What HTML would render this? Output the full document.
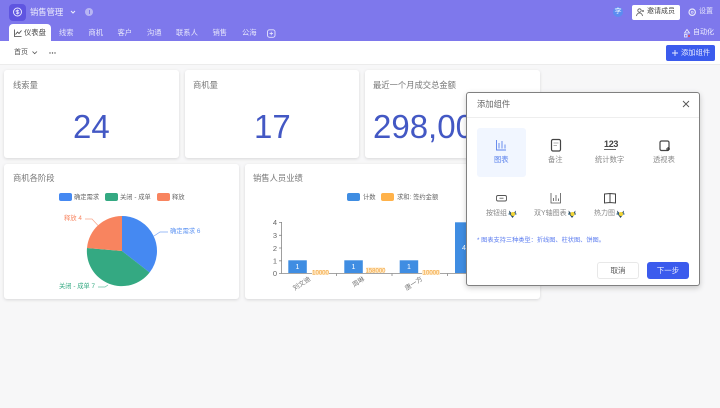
<!DOCTYPE html>
<html lang="zh"><head><meta charset="utf-8"><style>
*{box-sizing:border-box}
html,body{margin:0;padding:0}
body{width:720px;height:408px;overflow:hidden;position:relative;background:#f7f7f8;font-family:"Liberation Sans","Noto Sans CJK SC",sans-serif;color:#555}
#w{position:absolute;left:0;top:0;width:720px;height:408px;filter:blur(.3px)}
.a{position:absolute;white-space:nowrap}
.tab{position:absolute;top:28px;font-size:7.3px;line-height:10px;color:#e6e6fb;white-space:nowrap}
.card{position:absolute;background:#fff;border-radius:3px;box-shadow:0 1px 3px rgba(0,0,0,.13)}
.title{position:absolute;left:9px;top:9px;font-size:8.3px;line-height:12px;color:#777;white-space:nowrap}
.num{position:absolute;top:36px;font-size:33px;line-height:42px;color:#4358c4;white-space:nowrap}
.lab{position:absolute;font-size:7.3px;line-height:10px;color:#8a8a8a;white-space:nowrap;text-align:center}
.leg{position:absolute;font-size:6.3px;line-height:9px;color:#666;white-space:nowrap}
svg{position:absolute;overflow:visible}
</style></head><body><div id="w">
<div class="a" style="left:0;top:0;width:720px;height:41px;background:#7e78ec"></div>
<div class="a" style="left:9px;top:4px;width:17px;height:17px;border-radius:4px;background:#5f55e0"></div>
<svg style="left:9px;top:4px" width="17" height="17"><circle cx="8.500" cy="8" r="4" fill="none" stroke="#e8e8ff" stroke-width="1"/><path d="M8.500 5.500v5M10 6.500H8Q7 6.500 7 7.300T8 8H9Q10 8 10 8.800T9 9.500H7" fill="none" stroke="#e8e8ff" stroke-width=".7"/></svg>
<div class="a" style="left:30px;top:6px;font-size:8.300px;line-height:12px;color:#eeeefc">销售管理</div>
<svg style="left:70px;top:10px" width="6" height="5"><path d="M1 1L3 3 5 1" fill="none" stroke="#eeeefc" stroke-width="1"/></svg>
<div class="a" style="left:85px;top:8px;width:8px;height:8px;border-radius:50%;background:#b7b5f3"></div>
<div class="a" style="left:88.500px;top:10px;width:1px;height:4px;background:#7e78ec"></div>
<div class="a" style="left:9px;top:24px;width:42px;height:17px;background:#fff;border-radius:4px 4px 0 0"></div>
<svg style="left:14px;top:29px" width="8" height="8"><path d="M.500 .500V7.500H7.500M1.500 5.500L3.500 3 5 4.500 7.500 1.500" fill="none" stroke="#444" stroke-width=".8"/></svg>
<div class="tab" style="left:24px;color:#444">仪表盘</div>
<div class="tab" style="left:59px">线索</div>
<div class="tab" style="left:88.500px">商机</div>
<div class="tab" style="left:117.500px">客户</div>
<div class="tab" style="left:147px">沟通</div>
<div class="tab" style="left:176px">联系人</div>
<div class="tab" style="left:212.500px">销售</div>
<div class="tab" style="left:242px">公海</div>
<svg style="left:267px;top:29px" width="9" height="9"><rect x=".5" y=".8" width="7.500" height="7.500" rx="2" fill="none" stroke="#e6e6fb" stroke-width=".9"/><path d="M4.250 2.800V6.300M2.500 4.550H6" stroke="#e6e6fb" stroke-width=".8"/></svg>
<div class="a" style="left:613px;top:7px;width:10px;height:10px;border-radius:50%;background:#5b8cf0"></div>
<div class="a" style="left:614.500px;top:7px;font-size:7px;line-height:10px;color:#e8f0ff">李</div>
<div class="a" style="left:632px;top:4.500px;width:48px;height:15px;background:#fff;border-radius:2px"></div>
<svg style="left:636px;top:8px" width="9" height="9"><circle cx="3.500" cy="2.500" r="1.700" fill="none" stroke="#555" stroke-width=".8"/><path d="M.5 8Q1 5 3.500 5T6.500 8M7 2V4M6 3H8" fill="none" stroke="#555" stroke-width=".8"/></svg>
<div class="a" style="left:647px;top:7px;font-size:7px;line-height:10px;color:#444">邀请成员</div>
<svg style="left:688px;top:8px" width="9" height="9"><circle cx="4.200" cy="4.200" r="3.200" fill="none" stroke="#e6e6fb" stroke-width="1.200"/><circle cx="4.200" cy="4.200" r="1" fill="none" stroke="#e6e6fb" stroke-width=".7"/></svg>
<div class="a" style="left:699px;top:7px;font-size:7px;line-height:10px;color:#e6e6fb">设置</div>
<svg style="left:683px;top:29px" width="8" height="9"><path d="M4 .500L6.500 4H1.500ZM1.500 5.500H4V8H1.500Z" fill="none" stroke="#f0f0ff" stroke-width=".8"/><circle cx="6" cy="7" r="1" fill="#e6454a"/></svg>
<div class="a" style="left:693px;top:28px;font-size:7px;line-height:10px;color:#f0f0ff">自动化</div>

<div class="a" style="left:0;top:41px;width:720px;height:24px;background:#fff;border-bottom:1px solid #ececec"></div>
<div class="a" style="left:14px;top:47.500px;font-size:7px;line-height:10px;color:#555">首页</div>
<svg style="left:32px;top:51px" width="6" height="4"><path d="M.5 .500L2.700 2.700 5 .500" fill="none" stroke="#555" stroke-width=".8"/></svg>
<svg style="left:49px;top:52px" width="8" height="2"><circle cx="1" cy="1" r=".7" fill="#555"/><circle cx="3.500" cy="1" r=".7" fill="#555"/><circle cx="6" cy="1" r=".7" fill="#555"/></svg>
<div class="a" style="left:666px;top:45px;width:49px;height:16px;background:#3b5bed;border-radius:2px"></div>
<svg style="left:671px;top:49px" width="8" height="8"><path d="M4 1V7M1 4H7" stroke="#e8ecff" stroke-width=".9"/></svg>
<div class="a" style="left:681px;top:48px;font-size:7.300px;line-height:10px;color:#e4e8ff">添加组件</div>

<div class="card" style="left:4px;top:70px;width:175px;height:88px"><div class="title">线索量</div><div class="num" style="left:69px">24</div></div>
<div class="card" style="left:185px;top:70px;width:174px;height:88px"><div class="title" style="left:8px">商机量</div><div class="num" style="left:69px">17</div></div>
<div class="card" style="left:365px;top:70px;width:175px;height:88px;overflow:hidden"><div class="title" style="left:8px">最近一个月成交总金额</div><div class="num" style="left:8px">298,000</div></div>

<div class="card" style="left:4px;top:164px;width:235px;height:135px"><div class="title" style="top:8px">商机各阶段</div></div>
<div class="card" style="left:245px;top:164px;width:295px;height:135px"><div class="title" style="left:8px;top:8px">销售人员业绩</div></div>

<!-- pie legend -->
<div class="a" style="left:59px;top:193px;width:13px;height:8px;background:#4589f2;border-radius:2px"></div>
<div class="leg" style="left:74px;top:193px">确定需求</div>
<div class="a" style="left:105px;top:193px;width:13px;height:8px;background:#34a982;border-radius:2px"></div>
<div class="leg" style="left:120px;top:193px">关闭 - 成单</div>
<div class="a" style="left:157px;top:193px;width:13px;height:8px;background:#f8845f;border-radius:2px"></div>
<div class="leg" style="left:172px;top:193px">释放</div>
<svg style="left:0;top:0" width="720" height="408">
<path d="M122 251V216A35 35 0 0 1 149.600 272.500Z" fill="#4589f2"/>
<path d="M122 251L149.600 272.500A35 35 0 0 1 87 248Z" fill="#34a982"/>
<path d="M122 251L87 248A35 35 0 0 1 122 216Z" fill="#f8845f"/>
<path d="M154 236L160 232H168" fill="none" stroke="#7da8f5" stroke-width=".7"/>
<path d="M98 225.500L92 219H85" fill="none" stroke="#f8a58a" stroke-width=".7"/>
<path d="M108 285L105 287H98" fill="none" stroke="#6cc3a5" stroke-width=".7"/>
</svg>
<div class="leg" style="left:170px;top:227px;color:#5f95f3">确定需求 6</div>
<div class="leg" style="left:64px;top:214px;color:#f8845f">释放 4</div>
<div class="leg" style="left:59px;top:282px;color:#34a982">关闭 - 成单 7</div>

<!-- bar legend -->
<div class="a" style="left:347px;top:193px;width:13px;height:8px;background:#3f8de2;border-radius:2px"></div>
<div class="leg" style="left:363px;top:193px">计数</div>
<div class="a" style="left:381px;top:193px;width:13px;height:8px;background:#ffb24a;border-radius:2px"></div>
<div class="leg" style="left:397px;top:193px">求和: 签约金额</div>
<svg style="left:0;top:0" width="720" height="408">
<path d="M281.500 222V273.500H470M279 222.500H282M279 235.300H282M279 248H282M279 260.800H282M279 273.500H282M336.500 273.500V276M392 273.500V276M447.500 273.500V276" fill="none" stroke="#888" stroke-width=".8"/>
<rect x="288.300" y="260.300" width="18.500" height="12.700" fill="#3f8de2"/>
<rect x="344.300" y="260.300" width="18.500" height="12.700" fill="#3f8de2"/>
<rect x="399.700" y="260.300" width="18.500" height="12.700" fill="#3f8de2"/>
<rect x="455" y="222.300" width="18.500" height="50.700" fill="#3f8de2"/>
<rect x="312" y="270" width="17" height="5" fill="#ffe9c7" rx="1"/>
<rect x="366" y="267.500" width="19" height="5.500" fill="#ffe9c7" rx="1"/>
<rect x="422" y="270" width="18" height="5" fill="#ffe9c7" rx="1"/>
<g font-family="Liberation Sans" font-size="7.500" fill="#666" text-anchor="end">
<text x="277" y="225">4</text><text x="277" y="238">3</text><text x="277" y="251">2</text><text x="277" y="263.500">1</text><text x="277" y="276">0</text></g>
<g font-family="Liberation Sans" font-size="7" fill="#fff" text-anchor="middle">
<text x="297.500" y="269">1</text><text x="353.500" y="269">1</text><text x="409" y="269">1</text><text x="464" y="250">4</text></g>
<g font-family="Liberation Sans" font-size="6" fill="#f2a33a" text-anchor="middle">
<text x="320.500" y="274.500">10000</text><text x="375.500" y="272.500">158000</text><text x="431" y="274.500">10000</text></g>
<g font-family="Liberation Sans,Noto Sans CJK SC" font-size="6.500" fill="#777" text-anchor="end">
<text transform="translate(311,280) rotate(-33)">刘文迪</text>
<text transform="translate(365,280) rotate(-33)">周琳</text>
<text transform="translate(423,280) rotate(-33)">唐一方</text></g>
</svg>

<!-- modal -->
<div class="a" style="left:466px;top:92px;width:234px;height:194px;background:#fff;border:1px solid #808080;border-radius:3px;box-shadow:0 2px 6px rgba(0,0,0,.2)"></div>
<div class="a" style="left:477px;top:98px;font-size:8.300px;line-height:12px;color:#666">添加组件</div>
<svg style="left:682px;top:100px" width="8" height="8"><path d="M1 1L7 7M7 1L1 7" stroke="#555" stroke-width=".9"/></svg>
<div class="a" style="left:467px;top:117px;width:232px;height:1px;background:#eee"></div>
<div class="a" style="left:477px;top:128px;width:49px;height:49px;background:#f1f6ff;border-radius:3px"></div>
<svg style="left:0;top:0" width="720" height="408">
<path d="M496.500 140V150H506M499 143V148.500M502 141V148.500M505 144.500V148.500" fill="none" stroke="#5b82ec" stroke-width=".9"/>
<rect x="551.500" y="139.500" width="9" height="11.500" rx="1.500" fill="none" stroke="#444" stroke-width="1.200"/><path d="M553.500 143H558.500M553.500 145.500H557" stroke="#999" stroke-width=".8"/>
<path d="M604 149.500H616" stroke="#555" stroke-width=".9"/>
<rect x="660" y="141" width="9" height="9.500" rx="1.500" fill="none" stroke="#444" stroke-width="1.200"/><path d="M668 147V151M666 149H670" stroke="#333" stroke-width=".9"/>
<rect x="496.500" y="195.500" width="10" height="5.500" rx="1.500" fill="none" stroke="#555" stroke-width=".9"/><path d="M499.500 198.200H503.500" stroke="#555" stroke-width=".8"/>
<path d="M551 193V203H560.500V193M553.500 201V198M556 201V195M558.500 201V198.500" fill="none" stroke="#555" stroke-width=".8"/>
<path d="M604.500 194L610 193.500 615.500 194V203L610 202.500 604.500 203ZM610 193.500V202.500" fill="none" stroke="#444" stroke-width="1"/>
</svg>
<div class="a" style="left:604px;top:138.500px;font-size:9px;line-height:11px;font-weight:bold;color:#444;letter-spacing:-.3px">123</div>
<div class="lab" style="left:494px;top:155px;color:#5b82ec">图表</div>
<div class="lab" style="left:548px;top:155px">备注</div>
<div class="lab" style="left:595px;top:155px">统计数字</div>
<div class="lab" style="left:653px;top:155px">透视表</div>
<div class="lab" style="left:486px;top:209px;font-size:7px">按钮组</div>
<div class="lab" style="left:534px;top:209px;font-size:7px">双Y轴图表</div>
<div class="lab" style="left:594px;top:209px;font-size:7px">热力图</div>
<svg style="left:0;top:0" width="720" height="408">
<g><path d="M509 210.500L512.500 214 516 210.500 515.500 214 512.500 218 509.500 214Z" fill="#2c4a60"/><path d="M508.500 214H516.500" stroke="#3a6d8a" stroke-width="1.200"/><circle cx="513" cy="214" r="2" fill="#f2d535"/></g>
<g transform="translate(59.500,0)"><path d="M509 210.500L512.500 214 516 210.500 515.500 214 512.500 218 509.500 214Z" fill="#2c4a60"/><path d="M508.500 214H516.500" stroke="#3a6d8a" stroke-width="1.200"/><circle cx="513" cy="214" r="2" fill="#f2d535"/></g>
<g transform="translate(108,0)"><path d="M509 210.500L512.500 214 516 210.500 515.500 214 512.500 218 509.500 214Z" fill="#2c4a60"/><path d="M508.500 214H516.500" stroke="#3a6d8a" stroke-width="1.200"/><circle cx="513" cy="214" r="2" fill="#f2d535"/></g>
</svg>
<div class="a" style="left:477px;top:236px;font-size:6.200px;line-height:9px;color:#5b7cf0">* 图表支持三种类型：折线图、柱状图、饼图。</div>
<div class="a" style="left:597px;top:262px;width:42px;height:17px;background:#fff;border:1px solid #e8e8e8;border-radius:3px;font-size:7.500px;line-height:15px;text-align:center;color:#555">取消</div>
<div class="a" style="left:647px;top:262px;width:42px;height:17px;background:#3b5bed;border-radius:3px;font-size:7.500px;line-height:17px;text-align:center;color:#e8ecff">下一步</div>
</div></body></html>
